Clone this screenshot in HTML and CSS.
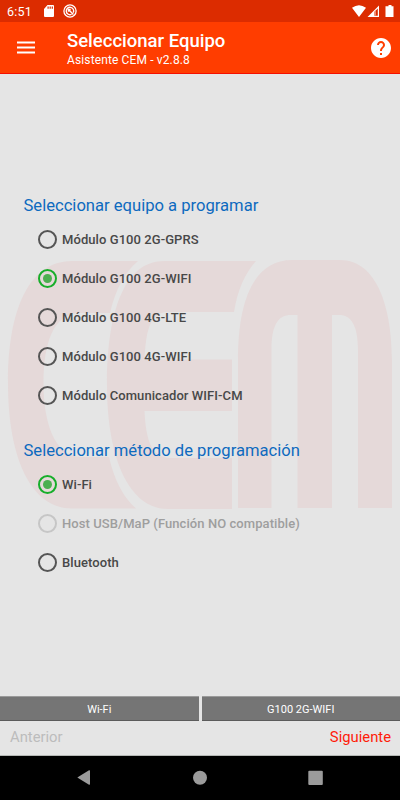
FILE: index.html
```html
<!DOCTYPE html>
<html lang="es">
<head>
<meta charset="utf-8">
<title>Seleccionar Equipo</title>
<link rel="stylesheet" href="styles.css">
</head>
<body>
<div class="statusbar">
  <span class="clock">6:51</span>
  <svg class="sd" width="10" height="12" viewBox="0 0 10 12"><path fill="#fff" fill-rule="evenodd" d="M3.5 0H9q1 0 1 1v10q0 1-1 1H1q-1 0-1-1V4zM3.5 1.5v2.3h1.2V1.500zM5.600 1.500v2.300h1.200V1.500zM7.700 1.500v2.300h1.200V1.500z"/></svg>
  <svg class="sync" width="14" height="14" viewBox="0 0 14 14" fill="none" stroke="#fff"><circle cx="7" cy="7" r="6.100" stroke-width="1.300"/><path stroke-width="1.400" d="M10.300 8.600A3.700 3.700 0 1 0 8.600 10.300M5.700 5.700l4.700 4.700M5.500 7.700V5.500H7.700"/></svg>
  <svg class="signals" width="42" height="13" viewBox="0 0 42 13"><path fill="#fff" d="M0 2.700Q7 -2.300 14 2.700L7 12zM34.500 1.300h2V0h3v1.300h2V12h-8V1.300z"/><path fill="#fff" d="M15.500 12L27 .5V12zM22.500 6.800V10.800H25.800V3.500z" fill-rule="evenodd"/><path fill="#f08b70" d="M22.500 6.800l1.500-1.500v5.500h-1.500z"/></svg>
</div>
<header class="appbar">
  <svg class="menu" width="18" height="13" viewBox="0 0 18 13"><path stroke="#fff" stroke-width="2" d="M0 1.500h18M0 6.500h18M0 11.500h18"/></svg>
  <div class="titles">
    <h1>Seleccionar Equipo</h1>
    <p>Asistente CEM - v2.8.8</p>
  </div>
  <svg class="help" width="20" height="20" viewBox="2 2 20 20"><path fill="#fff" d="M12 2C6.480 2 2 6.480 2 12s4.480 10 10 10 10-4.480 10-10S17.520 2 12 2zm1 17h-2v-2h2v2zm2.070-7.750l-.9.920C13.450 12.900 13 13.500 13 15h-2v-.5c0-1.100.45-2.100 1.170-2.830l1.240-1.260c.37-.36.59-.86.59-1.410 0-1.100-.9-2-2-2s-2 .9-2 2H8c0-2.210 1.790-4 4-4s4 1.790 4 4c0 .88-.36 1.680-.93 2.250z"/></svg>
</header>
<main class="content">
  <svg class="watermark" width="400" height="270" viewBox="0 250 400 270" fill="#e5d9d9">
    <path d="M138 261H72C32 261 8 304 8 383C8 460 32 508.500 72 508.500H136Q117 492 109 457H80C54 455 43.500 422 43.500 383C43.500 344 53 313 80 313H110Q118 278 138 261z"/>
    <path d="M256 261H164C126 261 107 308 107 385C107 460 130 509 168 509H232V458H169C151 456 146 440 144.500 411H232V359.500H144.500C146 333 149 312 168 312H234Q239 280 256 261z"/>
    <path d="M238 508V360C238 300 254 260 292 260H340C378 260 392 310 392 360V508H358V350C358 325 351 315 339 315H332V508H297.500V315H291C278 315 271.500 325 271.500 350V508z"/>
  </svg>
  <section class="group">
    <h2>Seleccionar equipo a programar</h2>
    <ul>
      <li><i class="radio"></i><span>Módulo G100 2G-GPRS</span></li>
      <li><i class="radio on"></i><span>Módulo G100 2G-WIFI</span></li>
      <li><i class="radio"></i><span>Módulo G100 4G-LTE</span></li>
      <li><i class="radio"></i><span>Módulo G100 4G-WIFI</span></li>
      <li><i class="radio"></i><span>Módulo Comunicador WIFI-CM</span></li>
    </ul>
  </section>
  <section class="group">
    <h2>Seleccionar método de programación</h2>
    <ul>
      <li><i class="radio on"></i><span>Wi-Fi</span></li>
      <li class="disabled"><i class="radio"></i><span>Host USB/MaP (Función NO compatible)</span></li>
      <li><i class="radio"></i><span>Bluetooth</span></li>
    </ul>
  </section>
</main>
<div class="summary"><div>Wi-Fi</div><div>G100 2G-WIFI</div></div>
<footer class="steps"><span class="prev">Anterior</span><span class="next">Siguiente</span></footer>
<nav class="sysnav">
  <svg width="400" height="44" viewBox="0 0 400 44" fill="#9b9b9b"><path d="M77.300 21.500L89 14.300Q90 14 90 15V28Q90 29 89 28.700z"/><circle cx="200" cy="21.700" r="7"/><rect x="308.300" y="14.700" width="14.500" height="14.200" rx="1"/></svg>
</nav>
</body>
</html>
```
FILE: styles.css
```css
* { box-sizing: border-box; margin: 0; padding: 0; }
body {
  width: 400px; height: 800px; overflow: hidden;
  display: flex; flex-direction: column;
  background: #e5e5e5; font-family: Roboto, sans-serif;
}
.statusbar {
  height: 22px; flex: none; background: #dc2c00; color: #fff;
  display: flex; align-items: center; padding: 0 7px;
}
.clock { width: 37px; font-size: 12.5px; letter-spacing: .2px; }
.sync { margin-left: 9px; }
.signals { margin-left: auto; margin-right: -1px; }
.appbar {
  height: 52px; flex: none; background: #ff3d00; color: #fff;
  border-bottom: 1px solid #f51000;
  display: flex; align-items: center; padding: 0 9px 0 17px;
}
.titles { margin-left: 32px; flex: 1; white-space: nowrap; padding-top: 3px; }
h1 { font-size: 18.500px; line-height: 22px; font-weight: 500; }
.titles p { font-size: 12px; line-height: 17px; letter-spacing: .13px; }
.content { flex: 1; position: relative; padding-top: 118px; }
.watermark { position: absolute; left: 0; top: 176px; }
.group { position: relative; padding-left: 23.500px; height: 245px; }
h2 { font-size: 16.600px; font-weight: 400; line-height: 28px; color: #0d6abf; white-space: nowrap; }
ul { list-style: none; padding-left: 14px; }
li { height: 39px; display: flex; align-items: center; gap: 5.500px; font-size: 13px; font-weight: 500; letter-spacing: .07px; color: #484848; white-space: nowrap; }
.radio { width: 19px; height: 19px; border: 2px solid #555; border-radius: 50%; display: grid; place-items: center; }
.radio.on { border-color: #17ae2a; }
.radio.on::after { content: ""; width: 9px; height: 9px; border-radius: 50%; background: #4caf50; }
.disabled { color: #9e9e9e; }
.disabled .radio { border-color: #c6c6c6; }
.summary { flex: none; height: 25px; display: grid; grid-template-columns: 198.500px 198.500px; gap: 3px; }
.summary div {
  background: #757575; color: #fff; font-size: 11px; text-align: center; line-height: 25px;
  border-top: 1px solid #9a9a9a; border-bottom: 1px solid #5b5b5b; height: 25px;
}
.steps { flex: none; height: 35px; display: flex; justify-content: space-between; padding: 0 9px 0 10px; line-height: 33px; font-size: 14.800px; border-bottom: 1px solid #b5b8b5; }
.prev { color: #bcbcbc; }
.next { color: #ff1b0a; }
.sysnav { flex: none; height: 44px; background: #000; }
.sysnav svg { display: block; }
```
